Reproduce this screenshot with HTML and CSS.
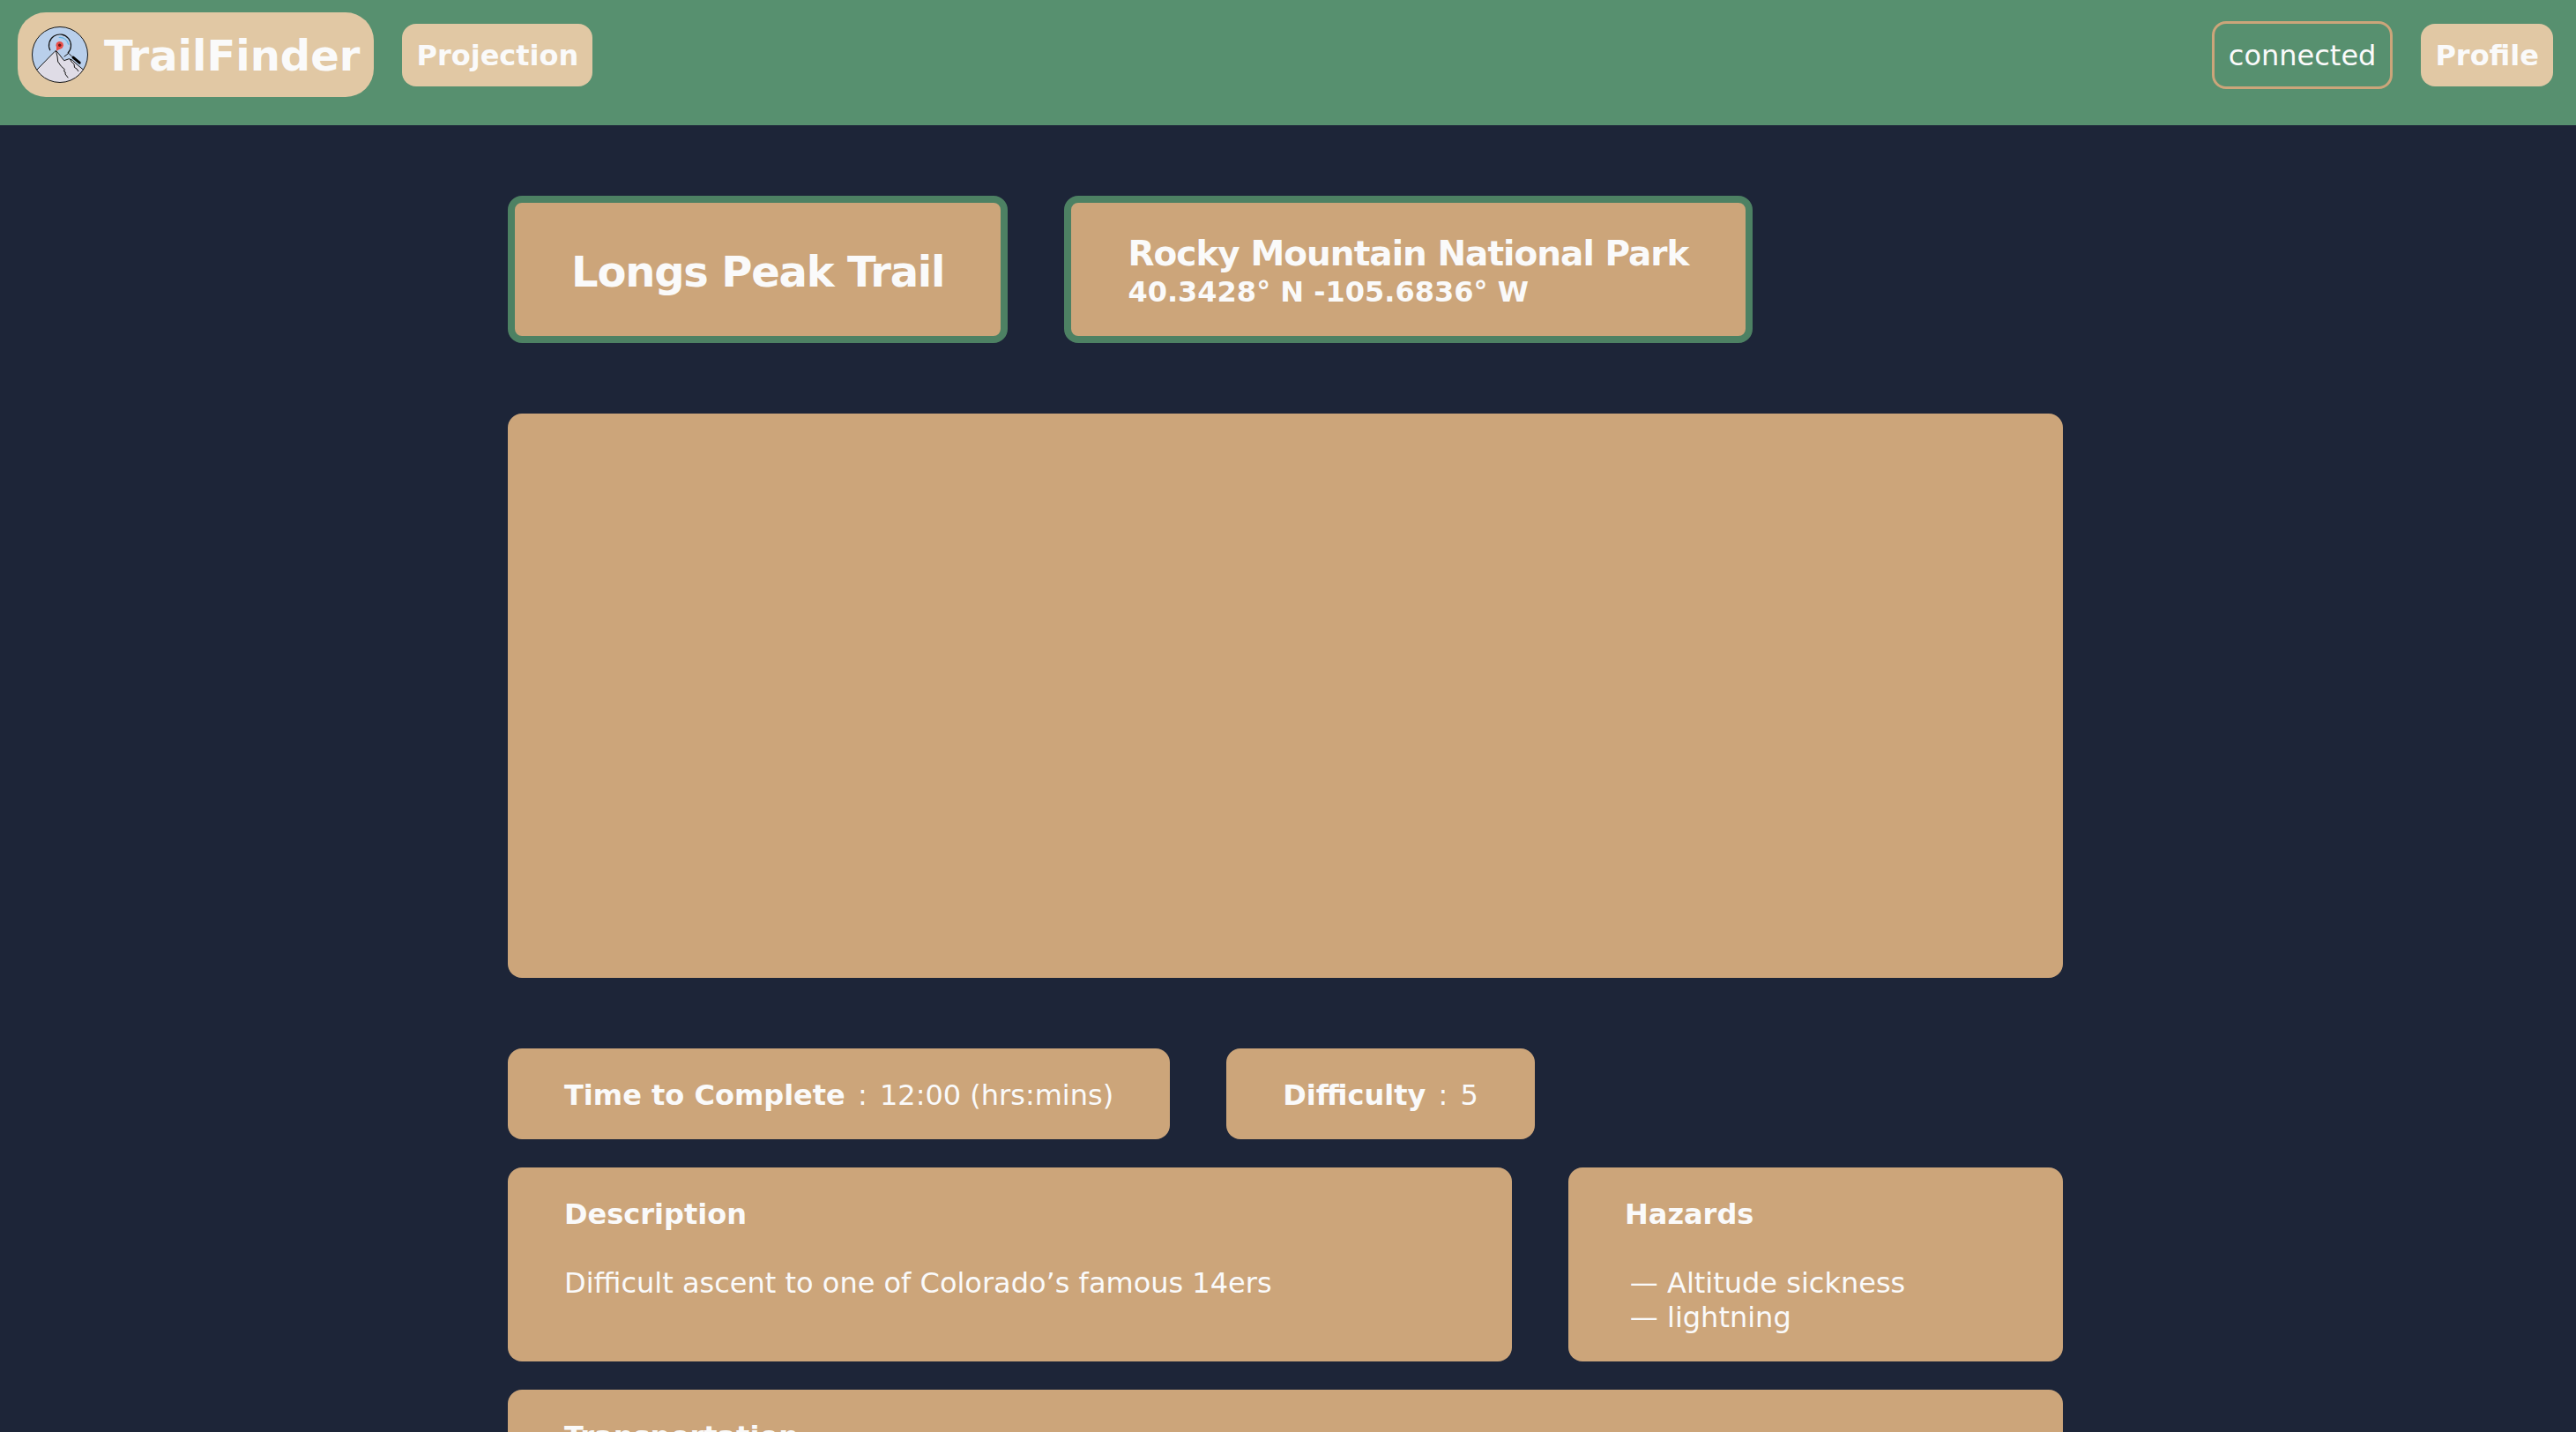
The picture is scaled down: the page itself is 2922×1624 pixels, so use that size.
FILE: index.html
```html
<!DOCTYPE html>
<html lang="en">
<head>
  <meta charset="utf-8">
  <title>TrailFinder – Longs Peak Trail</title>
  <link rel="stylesheet" href="styles.css">
</head>
<body>
  <header class="navbar">
    <a class="brand" href="#">
      <svg class="brand-logo" viewBox="0 0 64 64" aria-hidden="true">
        <defs><clipPath id="disc"><circle cx="32" cy="32" r="31.5"/></clipPath></defs>
        <circle cx="32" cy="32" r="31.5" fill="#b9cfeb"/>
        <g clip-path="url(#disc)" stroke="#151515" stroke-width="1" stroke-linejoin="round">
          <path d="M2 53 6 49 26 28.500 27.500 27.500 29 29 36.700 38.700 42.300 36.700 46.300 38.300 50 42 62 52V66H2z" fill="#dfdce6"/>
          <path d="M27.500 28l1.500 6 .7 6 4 5.500 3.500 3-.5 2.500 1.500 1-.2 2 3.300 4.300" fill="none"/>
          <path d="M43.500 37l1.500 3 3 2.500.5 4 2.500 1.500 2 3" fill="none"/>
        </g>
        <path d="M20.900 27.300A12.500 12.500 0 1 1 40.800 30.400" fill="none" stroke="#151515" stroke-width="1.200"/>
        <path d="M36.700 34.300l5.600-4.300M42 30.500l4 4" fill="none" stroke="#151515" stroke-width="1"/>
        <path d="M47 35.200l7.200 6" fill="none" stroke="#000" stroke-width="3" stroke-linecap="round"/>
        <path d="M30.700 12.500A10 10 0 0 1 41.800 20.700" fill="none" stroke="#63b3e4" stroke-width="1.200"/>
        <path d="M28 27.800v-5l5.500 2z" fill="#ea4f49"/>
        <circle cx="31.700" cy="21.300" r="4.200" fill="#ea4f49"/>
        <circle cx="31.700" cy="21.300" r="1.700" fill="#6b1b1a"/>
        <circle cx="32" cy="32" r="31.500" fill="none" stroke="#151515"/>
      </svg>
      <span>TrailFinder</span>
    </a>
    <a class="nav-button" href="#">Projection</a>
    <div class="nav-end">
      <span class="status">connected</span>
      <a class="nav-button" href="#">Profile</a>
    </div>
  </header>

  <main class="trail">
    <div class="row">
      <div class="card card-outlined"><h1>Longs Peak Trail</h1></div>
      <div class="card card-outlined">
        <h2>Rocky Mountain National Park</h2>
        <p class="coords">40.3428° N -105.6836° W</p>
      </div>
    </div>

    <div class="map"></div>

    <div class="details">
      <div class="row">
        <p class="card"><b>Time to Complete</b> <span class="colon">:</span> 12:00 (hrs:mins)</p>
        <p class="card"><b>Difficulty</b> <span class="colon">:</span> 5</p>
      </div>
      <div class="split">
        <section class="card card-section">
          <h3>Description</h3>
          <p>Difficult ascent to one of Colorado’s famous 14ers</p>
        </section>
        <section class="card card-section">
          <h3>Hazards</h3>
          <ul>
            <li>Altitude sickness</li>
            <li>lightning</li>
          </ul>
        </section>
      </div>
      <section class="card card-section">
        <h3>Transportation</h3>
      </section>
    </div>
  </main>
</body>
</html>
```

FILE: styles.css
```css
:root {
  --tan: #cca57a;
  --sand: #e1c8a4;
  --navy: #1d2538;
  --green: #57906f;
  --green-dark: #4d8163;
  --white: #fafafa;
}

* {
  box-sizing: border-box;
  margin: 0;
  padding: 0;
}

body {
  background: var(--navy);
  color: var(--white);
  font-family: Verdana, "DejaVu Sans", sans-serif;
  font-size: 32px;
  line-height: 39px;
}

a {
  color: inherit;
  text-decoration: none;
}

.navbar {
  display: flex;
  align-items: center;
  gap: 32px;
  padding: 14px 26px 32px 20px;
  background: var(--green);
}

.brand {
  display: flex;
  align-items: center;
  gap: 18px;
  padding: 16px;
  border-radius: 32px;
  background: var(--sand);
  font-size: 48px;
  font-weight: bold;
  line-height: 64px;
}

.brand span {
  padding-top: 2px;
  line-height: 62px;
}

.brand-logo {
  width: 64px;
  height: 64px;
}

.nav-button {
  padding: 17px 16px 15px;
  border-radius: 16px;
  background: var(--sand);
  font-weight: bold;
}

.nav-end {
  display: flex;
  align-items: center;
  gap: 32px;
  margin-left: auto;
}

.status {
  padding: 17px 16px 15px;
  border: 3px solid var(--tan);
  border-radius: 16px;
}

.trail {
  display: flex;
  flex-direction: column;
  gap: 80px;
  padding: 80px 582px 80px 576px;
}

.row {
  display: flex;
  gap: 64px;
}

.card {
  padding: 34px 64px 30px;
  border-radius: 16px;
  background: var(--tan);
}

.card-outlined {
  display: flex;
  flex-direction: column;
  justify-content: center;
  border: 8px solid var(--green-dark);
}

.colon {
  margin: 0 4px;
}

h1,
h2 {
  letter-spacing: -0.025em;
  white-space: nowrap;
}

h1 {
  font-size: 48px;
  line-height: 58px;
}

h2 {
  font-size: 39px;
  line-height: 48px;
}

h3 {
  font-size: 32px;
}

.coords {
  font-weight: bold;
}

.map {
  height: 640px;
  border-radius: 16px;
  background: var(--tan);
}

.details {
  display: flex;
  flex-direction: column;
  gap: 32px;
}

.split {
  display: grid;
  grid-template-columns: 67fr 33fr;
  gap: 64px;
}

.card-section {
  display: flex;
  flex-direction: column;
  gap: 39px;
}

ul {
  padding-left: 48px;
  list-style: "— ";
}
```
